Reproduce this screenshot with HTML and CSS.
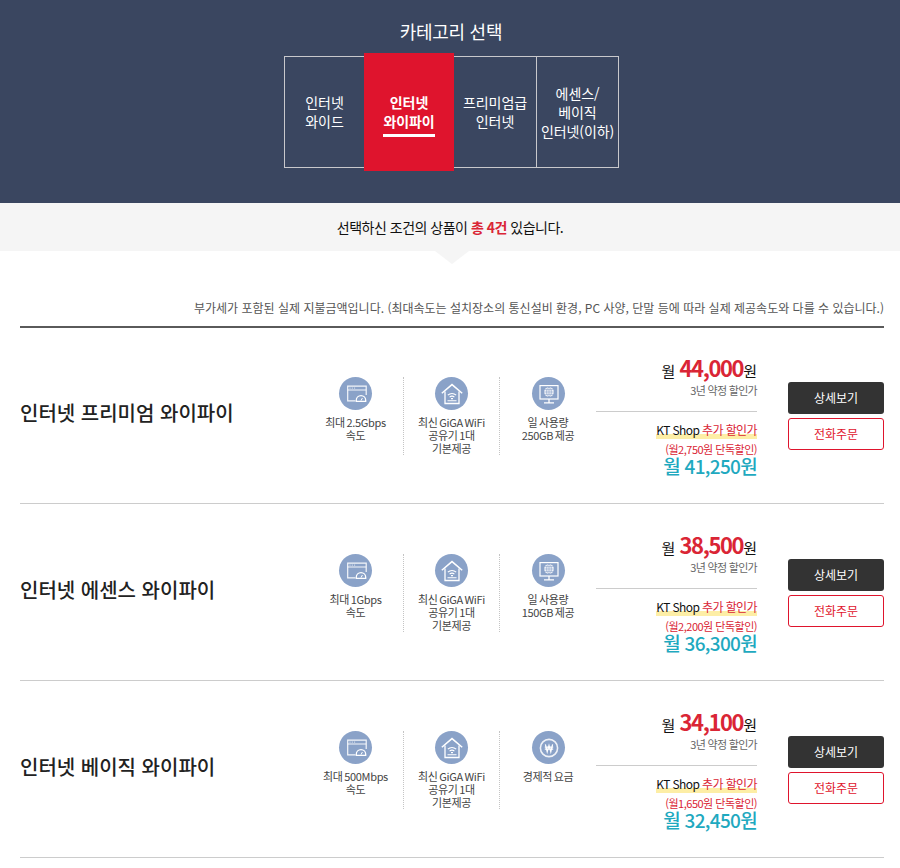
FILE: index.html
```html
<!DOCTYPE html>
<html lang="ko">
<head>
<meta charset="utf-8">
<title>카테고리 선택</title>
<link rel="stylesheet" href="styles.css">
</head>
<body>
<svg class="defs" width="0" height="0" aria-hidden="true">
  <symbol id="i-speed" viewBox="0 0 33 33">
    <path d="M16.5 23.9H8.7V9.2H27.2V18" fill="none" stroke="#fff" stroke-width="1.2" stroke-opacity=".9"/>
    <path d="M8.7 13H27.2" fill="none" stroke="#fff" stroke-width="1.2" stroke-opacity=".9"/>
    <path d="M10.5 11.1h1M12.8 11.1h1M15.1 11.1h1" stroke="#fff" stroke-width="1" stroke-opacity=".8"/>
    <path d="M17.3 24.3v-1a4.7 4.7 0 0 1 9.4 0v1z" fill="#8aa2c8" stroke="#fff" stroke-width="1.3"/>
    <path d="M22 23.6l1.4-2.6" stroke="#fff" stroke-width="1"/>
  </symbol>
  <symbol id="i-home" viewBox="0 0 33 33">
    <path d="M6.8 16.3L17 7.6l10.2 8.7" fill="none" stroke="#fff" stroke-width="1.5"/>
    <path d="M10 14.5v12h14v-12" fill="none" stroke="#fff" stroke-width="1.3"/>
    <path d="M12.8 18.2a6.4 6.4 0 0 1 8.4 0M14.6 20.2a3.6 3.6 0 0 1 4.8 0" fill="none" stroke="#fff" stroke-width="1.1"/>
    <path d="M16 21.6h2" stroke="#fff" stroke-width="1.1"/>
    <path d="M12.5 23.7h9" stroke="#fff" stroke-width="1.1"/>
  </symbol>
  <symbol id="i-globe" viewBox="0 0 33 33">
    <rect x="8" y="8.6" width="18" height="13.4" fill="none" stroke="#fff" stroke-width="1.2"/>
    <circle cx="17" cy="15" r="4.8" fill="#fff"/>
    <path d="M12.2 15h9.6M17 10.2v9.6M13 12.7h8M13 17.3h8" stroke="#8aa2c8" stroke-width=".7"/>
    <ellipse cx="17" cy="15" rx="2.3" ry="4.8" fill="none" stroke="#8aa2c8" stroke-width=".7"/>
    <path d="M17 22v3.6M12 25.8h10" stroke="#fff" stroke-width="1.3"/>
  </symbol>
  <symbol id="i-won" viewBox="0 0 33 33">
    <circle cx="17" cy="17" r="8.6" fill="none" stroke="#fff" stroke-width="1.6" stroke-opacity=".85"/>
    <path d="M13.4 13.4l1.8 7.4 1.8-6.4 1.8 6.4 1.8-7.4M12.8 16.2h8.4M12.8 18.2h8.4" fill="none" stroke="#fff" stroke-width="1.2"/>
  </symbol>
</svg>

<header class="hero">
  <h1 class="hero-title">카테고리 선택</h1>
  <nav class="tabs">
    <a class="tab tab-wide">인터넷<br>와이드</a>
    <a class="tab tab-active"><span class="tab-mark">인터넷<br>와이파이</span></a>
    <a class="tab tab-prem">프리미엄급<br>인터넷</a>
    <a class="tab tab-ess">에센스/<br>베이직<br>인터넷(이하)</a>
  </nav>
</header>

<div class="notice">
  <p>선택하신 조건의 상품이 <strong>총 4건</strong> 있습니다.</p>
</div>

<main class="content">
  <p class="vat">부가세가 포함된 실제 지불금액입니다. (최대속도는 설치장소의 통신설비 환경, PC 사양, 단말 등에 따라 실제 제공속도와 다를 수 있습니다.)</p>

  <ul class="plans">
    <li class="plan">
      <h2 class="plan-name">인터넷 프리미엄 와이파이</h2>
      <ul class="feats">
        <li class="feat"><svg class="feat-ic"><use href="#i-speed"/></svg><span>최대 2.5Gbps<br>속도</span></li>
        <li class="feat"><svg class="feat-ic"><use href="#i-home"/></svg><span>최신 GiGA WiFi<br>공유기 1대<br>기본제공</span></li>
        <li class="feat"><svg class="feat-ic"><use href="#i-globe"/></svg><span>일 사용량<br>250GB 제공</span></li>
      </ul>
      <div class="price">
        <p class="p-main">월 <b>44,000</b>원</p>
        <p class="p-sub">3년 약정 할인가</p>
        <p class="p-kt"><span>KT Shop <em>추가 할인가</em></span></p>
        <p class="p-extra">(월2,750원 단독할인)</p>
        <p class="p-final">월 41,250원</p>
      </div>
      <div class="btns"><a class="btn btn-dark">상세보기</a><a class="btn btn-line">전화주문</a></div>
    </li>
    <li class="plan">
      <h2 class="plan-name">인터넷 에센스 와이파이</h2>
      <ul class="feats">
        <li class="feat"><svg class="feat-ic"><use href="#i-speed"/></svg><span>최대 1Gbps<br>속도</span></li>
        <li class="feat"><svg class="feat-ic"><use href="#i-home"/></svg><span>최신 GiGA WiFi<br>공유기 1대<br>기본제공</span></li>
        <li class="feat"><svg class="feat-ic"><use href="#i-globe"/></svg><span>일 사용량<br>150GB 제공</span></li>
      </ul>
      <div class="price">
        <p class="p-main">월 <b>38,500</b>원</p>
        <p class="p-sub">3년 약정 할인가</p>
        <p class="p-kt"><span>KT Shop <em>추가 할인가</em></span></p>
        <p class="p-extra">(월2,200원 단독할인)</p>
        <p class="p-final">월 36,300원</p>
      </div>
      <div class="btns"><a class="btn btn-dark">상세보기</a><a class="btn btn-line">전화주문</a></div>
    </li>
    <li class="plan">
      <h2 class="plan-name">인터넷 베이직 와이파이</h2>
      <ul class="feats">
        <li class="feat"><svg class="feat-ic"><use href="#i-speed"/></svg><span>최대 500Mbps<br>속도</span></li>
        <li class="feat"><svg class="feat-ic"><use href="#i-home"/></svg><span>최신 GiGA WiFi<br>공유기 1대<br>기본제공</span></li>
        <li class="feat"><svg class="feat-ic"><use href="#i-won"/></svg><span>경제적 요금</span></li>
      </ul>
      <div class="price">
        <p class="p-main">월 <b>34,100</b>원</p>
        <p class="p-sub">3년 약정 할인가</p>
        <p class="p-kt"><span>KT Shop <em>추가 할인가</em></span></p>
        <p class="p-extra">(월1,650원 단독할인)</p>
        <p class="p-final">월 32,450원</p>
      </div>
      <div class="btns"><a class="btn btn-dark">상세보기</a><a class="btn btn-line">전화주문</a></div>
    </li>
  </ul>
</main>
</body>
</html>
```
FILE: styles.css
```css
* { box-sizing: border-box; }
html, body { margin: 0; padding: 0; }
body {
  background: #fff;
  color: #222;
  font-family: "Noto Sans CJK KR", "Noto Sans", sans-serif;
  height: 868px;
  overflow: hidden;
}
p, h1, h2, ul { margin: 0; padding: 0; }
ul { list-style: none; }
.defs { position: absolute; }

.hero {
  background: #3a4660;
  height: 203px;
  padding-top: 18px;
}
.hero-title {
  color: #fff;
  font-size: 18px;
  font-weight: 400;
  line-height: 26px;
  letter-spacing: -0.3px;
  text-align: center;
  padding-left: 2px;
}
.tabs {
  display: flex;
  align-items: center;
  width: 335px;
  margin: 9px 0 0 284px;
  height: 118px;
}
.tab {
  display: flex;
  align-items: center;
  justify-content: center;
  height: 112px;
  color: #fff;
  font-size: 14px;
  line-height: 19px;
  letter-spacing: -0.1px;
  text-align: center;
  border: 1px solid #c8c8cc;
}
.tab-wide { width: 80px; border-right: 0; }
.tab-active {
  width: 90px;
  height: 118px;
  background: #df142d;
  border: 0;
  font-weight: 700;
}
.tab-mark {
  border-bottom: 3px solid #fff;
  padding: 6px 0 3px;
}
.tab-prem { width: 83px; border-left: 0; }
.tab-ess { width: 82px; border-left: 0; }

.notice {
  position: relative;
  background: #f5f5f5;
  height: 48px;
  text-align: center;
  font-size: 14px;
  line-height: 48px;
  letter-spacing: -0.5px;
  color: #111;
}
.notice strong { color: #da2535; font-weight: 700; }
.notice::after {
  content: "";
  position: absolute;
  left: 435px;
  top: 48px;
  border-style: solid;
  border-width: 13px 17px 0 17px;
  border-color: #f5f5f5 transparent transparent transparent;
}

.content { padding: 48px 16px 0 20px; }
.vat {
  font-size: 12px;
  line-height: 18px;
  color: #555;
  text-align: right;
  white-space: nowrap;
  margin-bottom: 9px;
}
.plans { border-top: 2px solid #5a5a5a; }
.plan {
  display: flex;
  align-items: flex-start;
  height: 177px;
  border-bottom: 1px solid #ccc;
}
.plan:first-child { margin-top: -1px; }
.plan-name {
  width: 288px;
  margin-top: 71px;
  font-size: 20px;
  line-height: 30px;
  font-weight: 500;
  color: #222;
  white-space: nowrap;
}
.feats {
  display: flex;
  width: 288px;
  margin-top: 50px;
}
.feat {
  width: 96px;
  height: 78px;
  display: flex;
  flex-direction: column;
  align-items: center;
  text-align: center;
  font-size: 11px;
  line-height: 13px;
  letter-spacing: -0.35px;
  word-spacing: -1px;
  color: #444;
  border-right: 1px dotted #c4c4c4;
}
.feat:last-child { border-right: 0; }
.feat-ic {
  width: 33px;
  height: 33px;
  border-radius: 50%;
  background: #8aa2c8;
  margin-bottom: 6px;
  flex: none;
}

.price {
  width: 161px;
  margin-top: 29px;
  text-align: right;
}
.p-main {
  font-size: 15px;
  line-height: 30px;
  height: 27px;
  color: #111;
}
.p-main b {
  font-size: 22px;
  line-height: 22px;
  font-weight: 700;
  color: #da2535;
  letter-spacing: -1.4px;
}
.p-sub {
  font-size: 11px;
  line-height: 15px;
  letter-spacing: -0.7px;
  color: #666;
  padding-bottom: 13px;
  border-bottom: 1px solid #ccc;
}
.p-kt {
  margin-top: 10px;
  height: 17px;
  font-size: 12px;
  line-height: 15px;
  letter-spacing: -0.6px;
  color: #111;
}
.p-kt span {
  display: inline-block;
  height: 17px;
  background: linear-gradient(transparent 12px, #fdeea6 12px);
}
.p-kt em { font-style: normal; color: #da2535; }
.p-extra {
  margin-top: 4px;
  font-size: 11px;
  line-height: 13px;
  letter-spacing: -0.5px;
  color: #da2535;
}
.p-final {
  margin-top: -1px;
  font-size: 19px;
  line-height: 22px;
  font-weight: 500;
  color: #1fa9bf;
  letter-spacing: -0.7px;
}

.btns {
  width: 96px;
  margin: 55px 0 0 31px;
  display: flex;
  flex-direction: column;
  gap: 4px;
}
.btn {
  display: block;
  height: 32px;
  border-radius: 3px;
  font-size: 12px;
  line-height: 32px;
  text-align: center;
}
.btn-dark { background: #333; color: #fff; }
.btn-line { border: 1px solid #df142d; color: #df142d; line-height: 30px; }
```
